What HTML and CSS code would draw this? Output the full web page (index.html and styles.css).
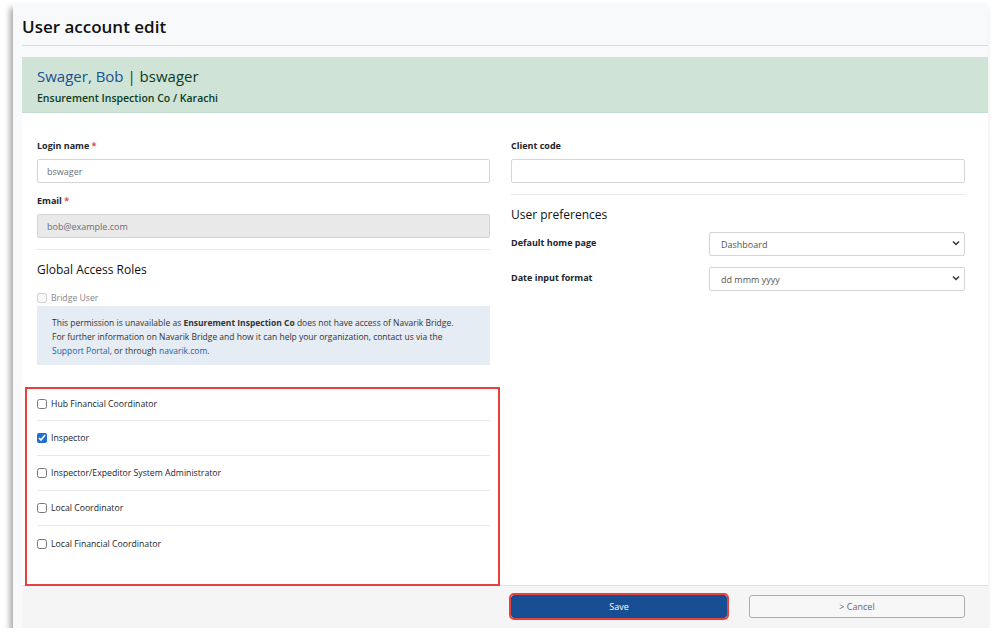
FILE: index.html
```html
<!DOCTYPE html>
<html>
  <head>
    <meta charset="utf-8">
    <link rel="stylesheet" href="styles.css">
    <title>User account edit</title>
  </head>
  <body>
    <div class="window">
      <div class="page-head">
        <h1>User account edit</h1>
      </div>

      <div class="card">
        <div class="card-head">
          <div class="who"><span class="name">Swager, Bob</span> | bswager</div>
          <div class="org">Ensurement Inspection Co / Karachi</div>
        </div>

        <div class="card-body">
          <div class="col">
            <label class="lbl">Login name <span class="req">*</span></label>
            <input class="inp" value="bswager">

            <label class="lbl">Email <span class="req">*</span></label>
            <input class="inp inp-ro" value="bob@example.com" readonly>

            <hr class="sep">

            <h2>Global Access Roles</h2>

            <div class="check check-off">
              <input type="checkbox" disabled> <span>Bridge User</span>
            </div>
            <div class="info">
              <p>This permission is unavailable as <b>Ensurement Inspection Co</b> does not have access of Navarik Bridge.</p>
              <p>For further information on Navarik Bridge and how it can help your organization, contact us via the</p>
              <p><a href="#">Support Portal</a>, or through <a href="#">navarik.com</a>.</p>
            </div>

            <div class="roles">
              <div class="role"><input type="checkbox"> <span>Hub Financial Coordinator</span></div>
              <div class="role"><input type="checkbox" checked> <span>Inspector</span></div>
              <div class="role"><input type="checkbox"> <span>Inspector/Expeditor System Administrator</span></div>
              <div class="role"><input type="checkbox"> <span>Local Coordinator</span></div>
              <div class="role"><input type="checkbox"> <span>Local Financial Coordinator</span></div>
            </div>
          </div>

          <div class="col">
            <label class="lbl">Client code</label>
            <input class="inp" value="">

            <hr class="sep">

            <h2>User preferences</h2>

            <div class="prefs">
              <div class="pref">
                <label class="lbl">Default home page</label>
                <div class="sel">
                  <select><option>Dashboard</option></select>
                  <svg width="10" height="10" viewBox="0 0 10 10"><path d="M2 3.5 L5 6.5 L8 3.5" fill="none" stroke="#333" stroke-width="1.5"/></svg>
                </div>
              </div>
              <div class="pref">
                <label class="lbl">Date input format</label>
                <div class="sel">
                  <select><option>dd mmm yyyy</option></select>
                  <svg width="10" height="10" viewBox="0 0 10 10"><path d="M2 3.5 L5 6.5 L8 3.5" fill="none" stroke="#333" stroke-width="1.5"/></svg>
                </div>
              </div>
            </div>
          </div>
        </div>

        <div class="card-foot">
          <div></div>
          <div class="btns">
            <button class="btn btn-save">Save</button>
            <button class="btn btn-cancel">&gt; Cancel</button>
          </div>
        </div>
      </div>
    </div>
  </body>
</html>
```

FILE: styles.css
```css
* {
    box-sizing: border-box;
    font-family: "Open Sans", "Noto Sans", sans-serif;
}

body {
    margin: 0;
    background: #fff;
}

.window {
    margin: 4px 4px 0 13px;
    height: 624px;
    background: #f8f9fa;
    padding-left: 9px;
    box-shadow: -3px 4px 6px rgba(0,0,0,.35);
}

.page-head {
    height: 42px;
    border-bottom: 1px solid #d9dcdf;
    display: flex;
    align-items: center;
    padding-top: 4px;
}

h1 {
    margin: 0;
    font-size: 17px;
    font-weight: 600;
    color: #111;
}

.card {
    margin-top: 11px;
    background: #fff;
}

.card-head {
    background: #cfe4d7;
    height: 56px;
    padding: 8px 15px 0;
    border-bottom: 1px solid #c4dccd;
}

.who {
    font-size: 15px;
    color: #0d3b24;
    line-height: 22px;
}

.who .name {
    color: #1c4f8f;
}

.org {
    font-size: 10.5px;
    font-weight: 600;
    color: #0d3b24;
    line-height: 16px;
    margin-top: 3px;
}

.card-body {
    display: grid;
    grid-template-columns: 453px 454px;
    column-gap: 21px;
    padding: 26px 23px 0 15px;
    height: 472px;
}

.col {
    display: flex;
    flex-direction: column;
}

.lbl {
    font-size: 9px;
    font-weight: 700;
    color: #212529;
    line-height: 14px;
}

.req {
    color: #d9534f;
}

.inp {
    height: 24px;
    margin: 6px 0 11px;
    border: 1px solid #d3d6d9;
    border-radius: 2px;
    padding: 0 9px;
    font-size: 9px;
    color: #6b6f73;
    background: #fff;
}

.inp-ro {
    background: #e9e9e9;
}

.sep {
    border: 0;
    border-top: 1px solid #e6e8ea;
    margin: 0 0 11px;
    width: 100%;
}

h2 {
    margin: 0;
    font-size: 12px;
    font-weight: 400;
    color: #111;
    line-height: 18px;
}

.check, .role {
    display: flex;
    align-items: center;
    gap: 4px;
    font-size: 8.7px;
    color: #212529;
}

.check {
    margin-top: 12px;
    height: 14px;
}

.check-off {
    color: #888;
}

input[type=checkbox] {
    width: 10px;
    height: 10px;
    margin: 0;
    accent-color: #1f6fd0;
}

.info {
    margin-top: 1px;
    background: #e5ecf4;
    padding: 10px 15px;
    font-size: 8.5px;
    line-height: 14px;
    color: #333;
    height: 59px;
}

.info p {
    margin: 0;
    white-space: nowrap;
}

.info a {
    color: #1a5da6;
    text-decoration: none;
}

.roles {
    position: relative;
    margin-top: 22px;
}

.roles::after {
    content: "";
    position: absolute;
    left: -12px;
    right: -10px;
    top: 0;
    height: 195px;
    border: 2px solid #e8403d;
    pointer-events: none;
}

.role {
    height: 35px;
    border-bottom: 1px solid #e6e8ea;
}

.role:first-child {
    height: 34px;
}

.role:last-child {
    border-bottom: 0;
}

.prefs {
    margin-top: 1px;
}

.pref {
    display: grid;
    grid-template-columns: 198px 1fr;
    align-items: center;
    height: 35px;
}

.sel {
    position: relative;
    height: 24px;
}

.sel select {
    appearance: none;
    width: 100%;
    height: 24px;
    border: 1px solid #d3d6d9;
    border-radius: 2px;
    background: #fff;
    padding: 0 11px;
    font-size: 9px;
    color: #555;
}

.sel svg {
    position: absolute;
    right: 4px;
    top: 7px;
}

.card-foot {
    display: grid;
    grid-template-columns: 453px 454px;
    column-gap: 21px;
    padding: 0 23px 0 15px;
    height: 43px;
    background: #f5f5f5;
    border-top: 1px solid #e2e2e2;
}

.btns {
    display: grid;
    grid-template-columns: 1fr 1fr;
    column-gap: 22px;
    padding-top: 9px;
}

.btn {
    height: 23px;
    font-size: 9px;
    border-radius: 3px;
    cursor: pointer;
}

.btn-save {
    background: #164d93;
    color: #fff;
    border: 1px solid #164d93;
    outline: 2px solid #e8403d;
    outline-offset: 0;
}

.btn-cancel {
    background: #f7f7f7;
    color: #666;
    border: 1px solid #a9adb1;
}
```
